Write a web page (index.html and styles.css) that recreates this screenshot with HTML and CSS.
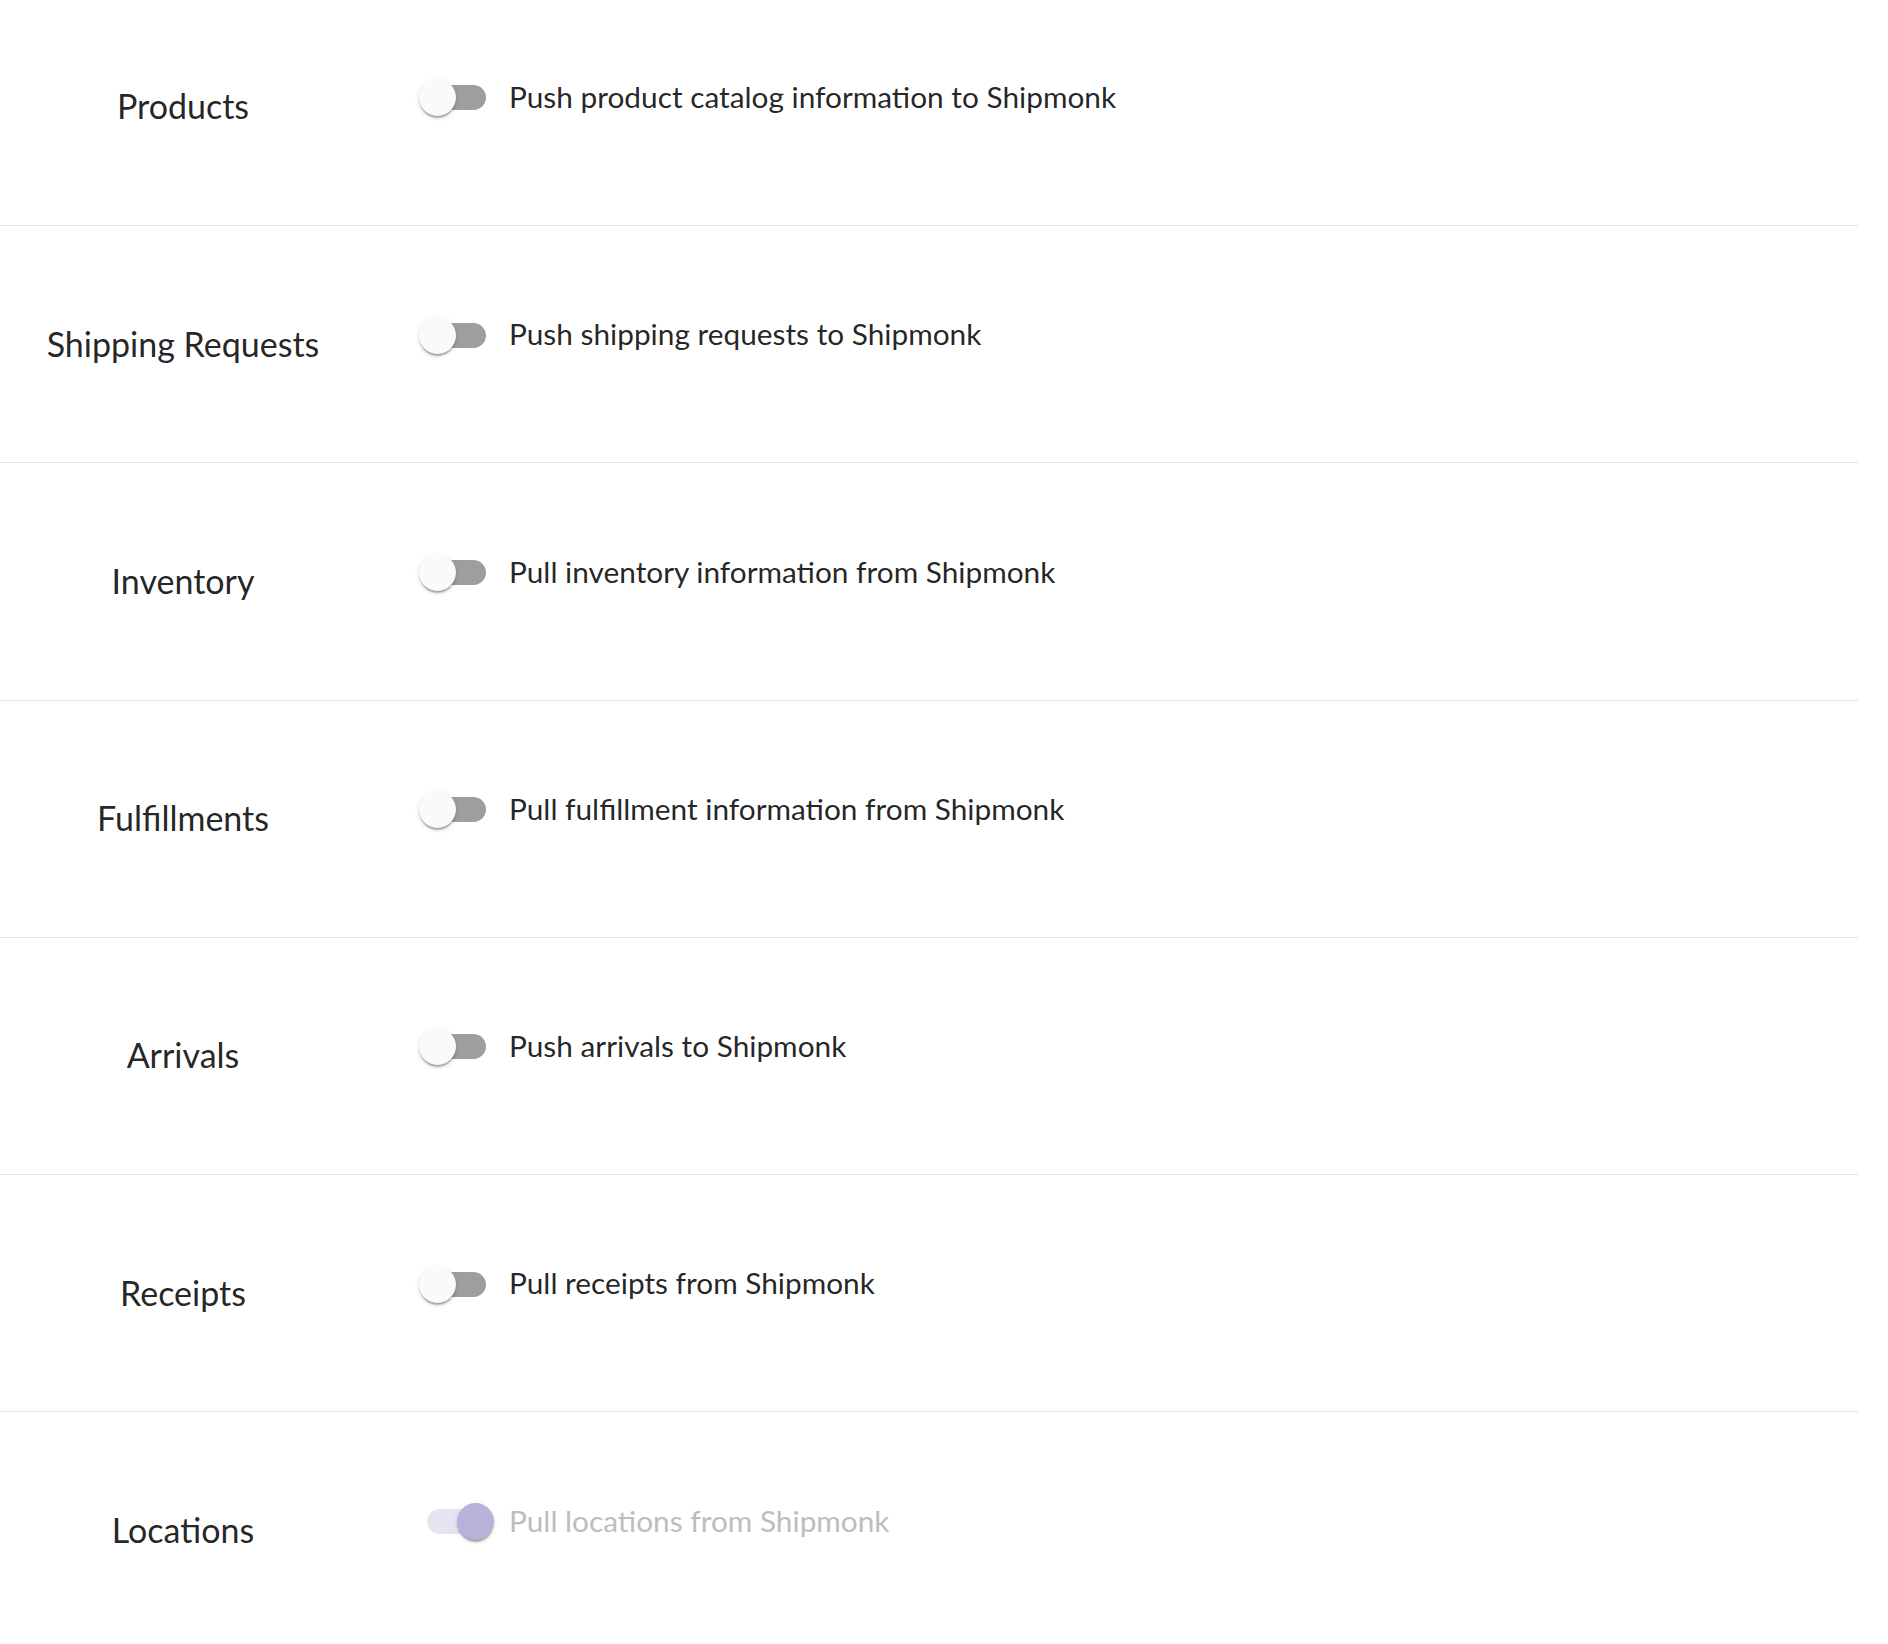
FILE: index.html
```html
<!DOCTYPE html>
<html lang="en">
<head>
<meta charset="utf-8">
<title>Shipmonk sync settings</title>
<link rel="stylesheet" href="styles.css">
</head>
<body>
<div class="settings">
  <div class="row">
    <div class="row-label">Products</div>
    <label class="control">
      <span class="switch"><span class="track"></span><span class="thumb"></span></span>
      <span class="control-text">Push product catalog information to Shipmonk</span>
    </label>
  </div>
  <div class="row">
    <div class="row-label">Shipping Requests</div>
    <label class="control">
      <span class="switch"><span class="track"></span><span class="thumb"></span></span>
      <span class="control-text">Push shipping requests to Shipmonk</span>
    </label>
  </div>
  <div class="row">
    <div class="row-label">Inventory</div>
    <label class="control">
      <span class="switch"><span class="track"></span><span class="thumb"></span></span>
      <span class="control-text">Pull inventory information from Shipmonk</span>
    </label>
  </div>
  <div class="row">
    <div class="row-label">Fulfillments</div>
    <label class="control">
      <span class="switch"><span class="track"></span><span class="thumb"></span></span>
      <span class="control-text">Pull fulfillment information from Shipmonk</span>
    </label>
  </div>
  <div class="row">
    <div class="row-label">Arrivals</div>
    <label class="control">
      <span class="switch"><span class="track"></span><span class="thumb"></span></span>
      <span class="control-text">Push arrivals to Shipmonk</span>
    </label>
  </div>
  <div class="row">
    <div class="row-label">Receipts</div>
    <label class="control">
      <span class="switch"><span class="track"></span><span class="thumb"></span></span>
      <span class="control-text">Pull receipts from Shipmonk</span>
    </label>
  </div>
  <div class="row">
    <div class="row-label">Locations</div>
    <label class="control is-disabled">
      <span class="switch is-checked"><span class="track"></span><span class="thumb"></span></span>
      <span class="control-text">Pull locations from Shipmonk</span>
    </label>
  </div>
</div>
</body>
</html>
```
FILE: styles.css
```css
html, body {
  margin: 0;
  padding: 0;
  background: #ffffff;
}

body {
  font-family: Lato, "Noto Sans", sans-serif;
  color: rgba(0, 0, 0, 0.87);
  overflow: hidden;
}

.settings {
  width: 1858px;
  margin-top: -11.25px;
  display: flex;
  flex-direction: column;
}

.row {
  height: 236.25px;
  border-bottom: 1px solid #e0e0e0;
  display: flex;
  align-items: center;
  flex: none;
}

.row-label {
  width: 366px;
  flex: none;
  text-align: center;
  font-size: 34px;
  line-height: 1.2;
  color: rgba(0, 0, 0, 0.87);
}

.control {
  margin-left: 37px;
  margin-bottom: 19px;
  display: flex;
  align-items: center;
  cursor: pointer;
}

.switch {
  position: relative;
  width: 104px;
  height: 68px;
  flex: none;
  display: inline-block;
}

.track {
  position: absolute;
  left: 22px;
  top: 22px;
  width: 61px;
  height: 25px;
  border-radius: 12.5px;
  background: #9e9e9e;
}

.thumb {
  position: absolute;
  left: 16px;
  top: 16px;
  width: 37px;
  height: 37px;
  border-radius: 50%;
  background: #fafafa;
  box-shadow: 0 3.6px 1.8px -1.8px rgba(0, 0, 0, 0.2),
              0 1.8px 1.8px 0 rgba(0, 0, 0, 0.14),
              0 1.8px 5.4px 0 rgba(0, 0, 0, 0.12);
}

.switch.is-checked .thumb {
  left: 54px;
  background: #b9b1d9;
}

.switch.is-checked .track {
  left: 24px;
  background: #e7e4f1;
}

.control-text {
  font-size: 29.8px;
  line-height: 1.5;
  margin-left: 2px;
}

.control.is-disabled {
  cursor: default;
}

.control.is-disabled .control-text {
  color: #bdbdbd;
}
```
